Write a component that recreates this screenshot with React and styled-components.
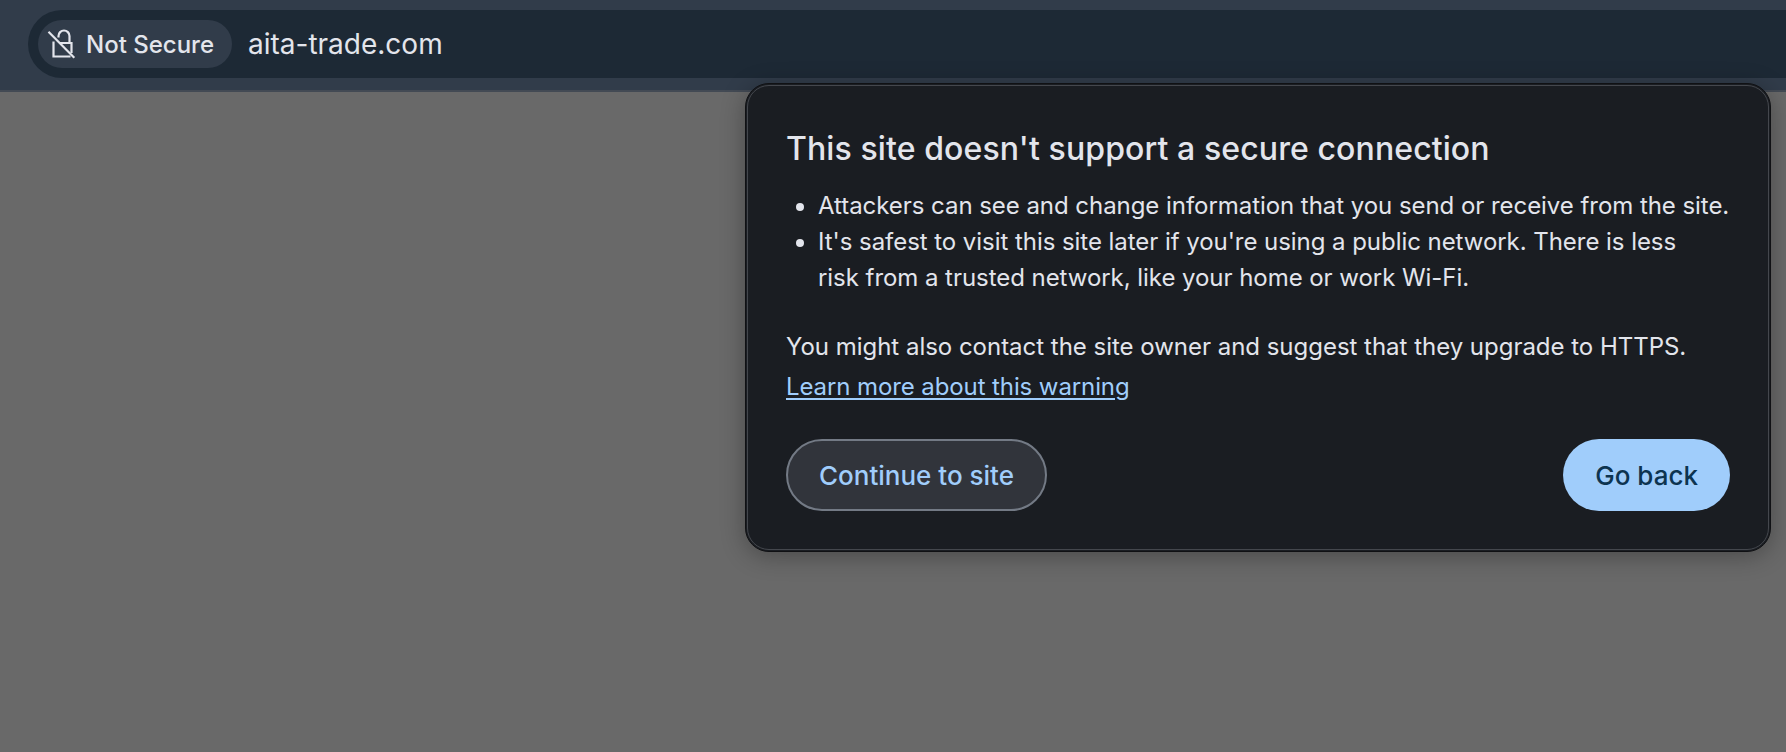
import React from "react";
import styled, { createGlobalStyle } from "styled-components";

const Global = createGlobalStyle`
  html, body { margin: 0; padding: 0; height: 100%; overflow: hidden; background: #696969; }
  #root { height: 100%; }
  * { box-sizing: border-box; }
`;

const Page = styled.div`
  position: relative;
  width: 1786px;
  height: 752px;
  overflow: hidden;
  background: #696969;
  font-family: Inter, "Liberation Sans", sans-serif;
  -webkit-font-smoothing: antialiased;
`;

const Toolbar = styled.header`
  height: 92px;
  padding: 10px 0 0 28px;
  background: #313c4a;
  border-bottom: 2px solid #434a54;
`;

const Omnibox = styled.div`
  display: flex;
  align-items: center;
  gap: 16px;
  height: 68px;
  padding-left: 10px;
  background: #1d2935;
  border-radius: 34px 0 0 34px;
`;

const SecurityChip = styled.div`
  display: flex;
  align-items: center;
  gap: 10px;
  width: 194px;
  height: 48px;
  padding-left: 8px;
  border-radius: 24px;
  background: #313c4a;
  color: #e3e5ec;
  font-size: 24px;
  font-weight: 550;
  white-space: nowrap;
`;

const LockIcon = styled.svg`
  width: 30px;
  height: 30px;
  flex: none;
  fill: none;
  stroke: #e3e5ec;
  stroke-width: 2.2;
`;

const Address = styled.span`
  color: #e3e5ec;
  font-size: 28px;
  white-space: nowrap;
`;

const Popup = styled.section`
  position: absolute;
  left: 745px;
  top: 83px;
  width: 1026px;
  height: 469px;
  padding: 45px 40px 0 40px;
  background: #1a1d22;
  border: 1.5px solid #101114;
  outline: 1.5px solid #44474d;
  outline-offset: -3px;
  border-radius: 24px;
  box-shadow: 0 4px 24px rgba(0, 0, 0, 0.3);
  color: #e3e5ec;
`;

const Title = styled.h1`
  margin: 0;
  font-size: 32px;
  line-height: 40px;
  font-weight: 550;
  letter-spacing: 0.1px;
  white-space: nowrap;
`;

const Bullets = styled.ul`
  margin: 19px 0 0;
  padding: 0 12px 0 32px;
  font-size: 24px;
  line-height: 36px;
  letter-spacing: -0.05px;
  li:first-child { white-space: nowrap; }
`;

const Paragraph = styled.p`
  margin: 33px 0 0;
  font-size: 24px;
  line-height: 36px;
  letter-spacing: -0.02px;
  white-space: nowrap;
`;

const LearnMore = styled.a`
  display: inline-block;
  margin-top: 4px;
  color: #a0cdfb;
  font-size: 24px;
  line-height: 36px;
  letter-spacing: -0.1px;
  text-decoration: underline;
  text-underline-offset: 3px;
`;

const Actions = styled.div`
  display: flex;
  justify-content: space-between;
  margin-top: 34px;
`;

const Button = styled.button`
  height: 72px;
  border-radius: 36px;
  padding: 0 ${p => (p.$primary ? 32 : 31)}px;
  border: ${p => (p.$primary ? "none" : "2px solid #737a85")};
  background: ${p => (p.$primary ? "#a0cdfb" : "#31343b")};
  color: ${p => (p.$primary ? "#0d3450" : "#a0cdfb")};
  font-family: inherit;
  font-size: 26px;
  font-weight: 550;
`;

export default function App() {
  return (
    <Page>
      <Global />
      <Toolbar>
        <Omnibox>
          <SecurityChip>
            <LockIcon viewBox="0 0 30 30">
              <path d="M7.500 12.500V27.500H24.500" />
              <path d="M13 14H25.500V24" />
              <path d="M12.500 8.500V7a5.500 5.500 0 0 1 11 0V14" />
              <path d="M2.500 2.700L28.300 28.700" />
            </LockIcon>
            Not Secure
          </SecurityChip>
          <Address>aita-trade.com</Address>
        </Omnibox>
      </Toolbar>
      <Popup>
        <Title>This site doesn't support a secure connection</Title>
        <Bullets>
          <li>Attackers can see and change information that you send or receive from the site.</li>
          <li>It's safest to visit this site later if you're using a public network. There is less risk from a trusted network, like your home or work Wi-Fi.</li>
        </Bullets>
        <Paragraph>You might also contact the site owner and suggest that they upgrade to HTTPS.</Paragraph>
        <LearnMore href="#">Learn more about this warning</LearnMore>
        <Actions>
          <Button>Continue to site</Button>
          <Button $primary>Go back</Button>
        </Actions>
      </Popup>
    </Page>
  );
}
